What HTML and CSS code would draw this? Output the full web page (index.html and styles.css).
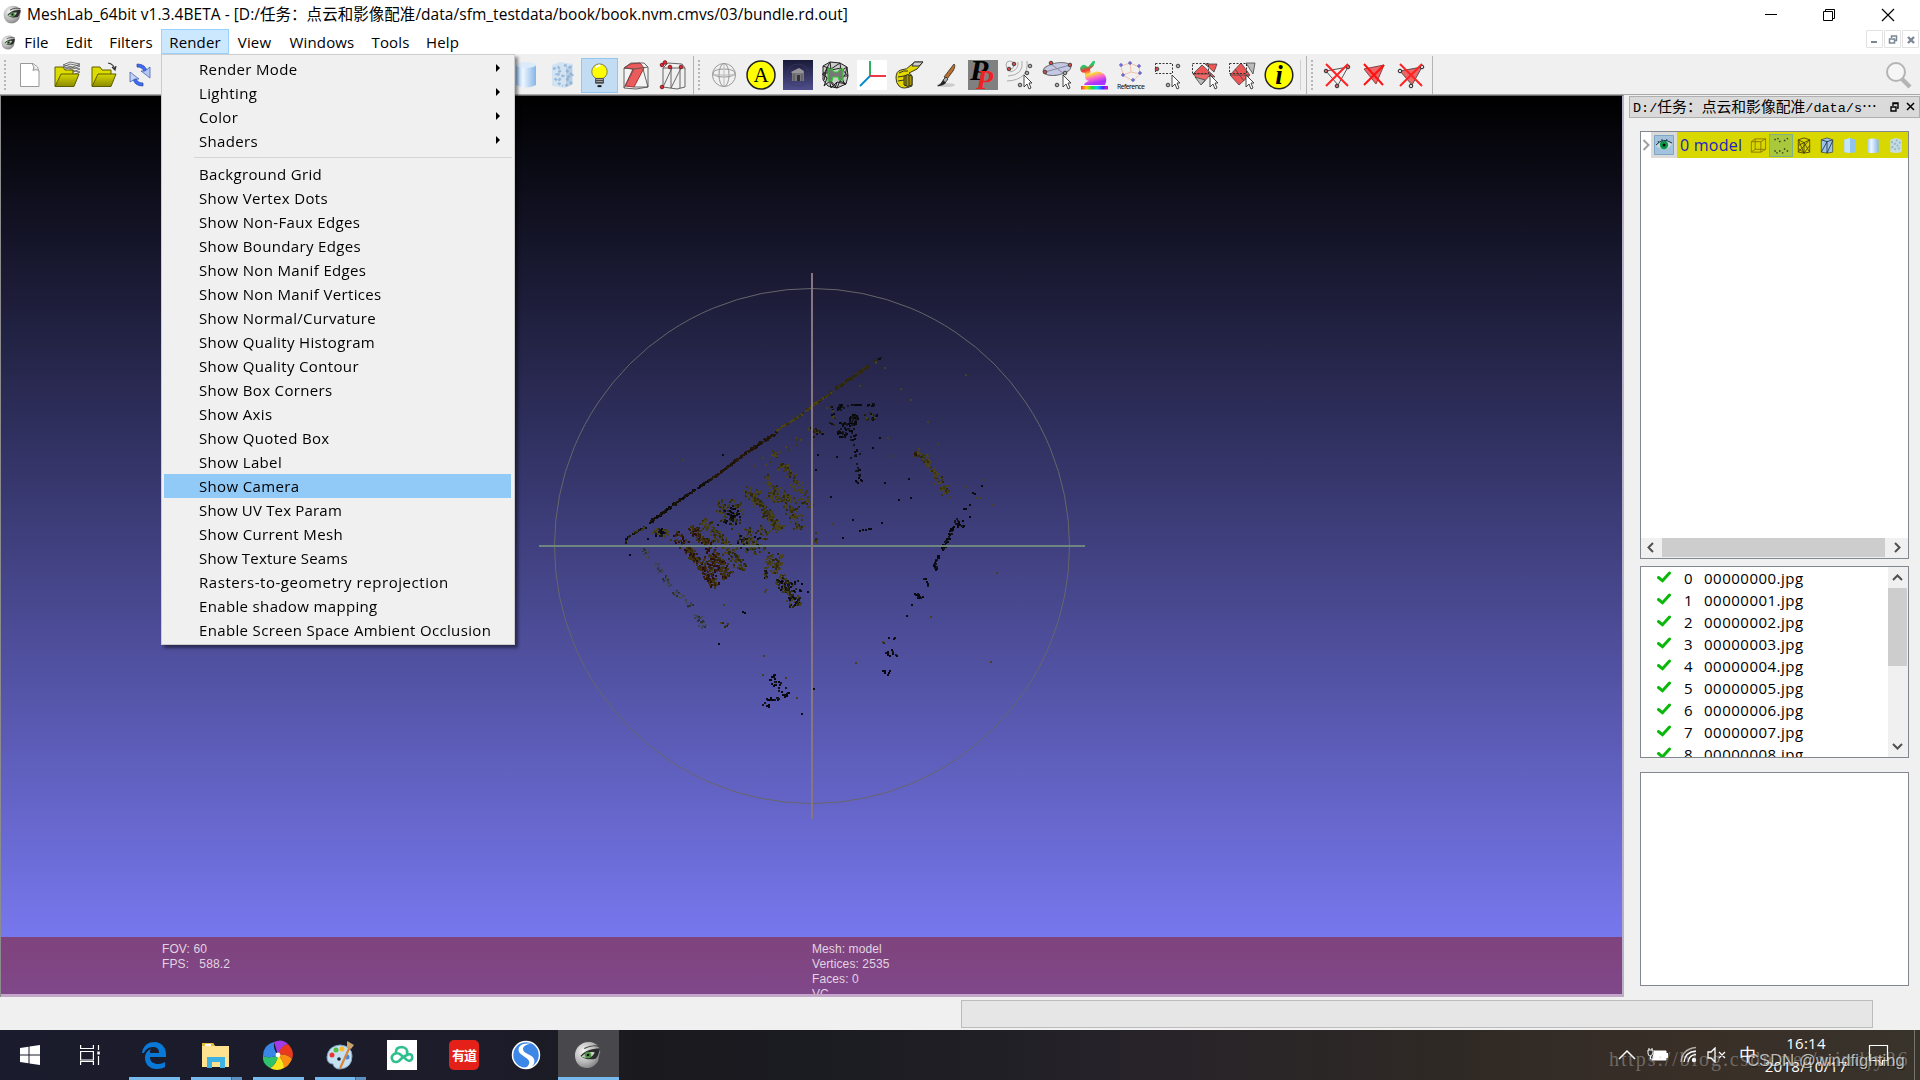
FILE: index.html
```html
<!DOCTYPE html>
<html lang="en">
<head>
<meta charset="utf-8">
<title>MeshLab</title>
<link rel="stylesheet" href="styles.css">
</head>
<body>
<svg class="defs" width="0" height="0">
  <defs>
    <radialGradient id="ball" cx=".35" cy=".35" r=".75"><stop offset="0" stop-color="#f4f4f4"/><stop offset=".6" stop-color="#b5b5b5"/><stop offset="1" stop-color="#777"/></radialGradient>
    <linearGradient id="fold" x1="0" y1="0" x2="0" y2="1"><stop offset="0" stop-color="#d8d800"/><stop offset="1" stop-color="#8a8a00"/></linearGradient>
    <linearGradient id="cyl"><stop offset="0" stop-color="#9cc8f4"/><stop offset=".35" stop-color="#eef6ff"/><stop offset="1" stop-color="#84b4e8"/></linearGradient>
    <linearGradient id="rain"><stop offset="0" stop-color="#f33"/><stop offset=".2" stop-color="#fc0"/><stop offset=".4" stop-color="#2d2"/><stop offset=".6" stop-color="#0cf"/><stop offset=".8" stop-color="#33f"/><stop offset="1" stop-color="#f0c"/></linearGradient>
    <linearGradient id="rainv" x1="0" y1="0" x2=".3" y2="1"><stop offset="0" stop-color="#0d9"/><stop offset=".25" stop-color="#2c6"/><stop offset=".42" stop-color="#f33"/><stop offset=".6" stop-color="#fd3"/><stop offset=".8" stop-color="#f6c"/><stop offset="1" stop-color="#a3f"/></linearGradient>
    <linearGradient id="temple" x1="0" y1="0" x2="0" y2="1"><stop offset="0" stop-color="#1a1a38"/><stop offset="1" stop-color="#504f8c"/></linearGradient>
    <symbol id="eye" viewBox="0 0 30 30">
      <path d="M16 1C7 1 1 8 1 15c0 8 5 14 13 14 6 0 8-3 11-6 2-3 1-6 3-11 1-3-3-11-12-11z" fill="url(#ball)"/>
      <path d="M7 16c5-6 11-8 21-8-1 3-2 9-5 11-5 1-12 1-16-3z" fill="#2c2c2c"/>
      <path d="M8 17c3-4 8-6 14-5-1 5-8 8-14 5z" fill="#c9d8c4"/>
      <circle cx="15" cy="15" r="3.600" fill="#4f9448"/><circle cx="15" cy="15" r="1.400" fill="#111"/>
      <path d="M11 8c6-3 10-4 17-2" stroke="#444" stroke-width="1.400" fill="none"/>
    </symbol>
    <symbol id="cursor" viewBox="0 0 10 16"><path d="M1 1v12l3-3 2 5 2-1-2-5h3z" fill="#fff" stroke="#333" stroke-width=".9"/></symbol>
    <symbol id="check" viewBox="0 0 14 12"><path d="M1.500 6.500l4 3.300L12.500 2" fill="none" stroke="#0ab80a" stroke-width="3" stroke-linecap="round"/></symbol>
  </defs>
</svg>

<div class="window">
  <header class="titlebar">
    <svg class="app-icon" width="19" height="19"><use href="#eye"/></svg>
    <span class="title">MeshLab_64bit v1.3.4BETA - [D:/任务：点云和影像配准/data/sfm_testdata/book/book.nvm.cmvs/03/bundle.rd.out]</span>
    <div class="win-buttons">
      <svg width="58" height="28" viewBox="0 0 58 28"><path d="M23 13.500h12" stroke="#000"/></svg>
      <svg width="58" height="28" viewBox="0 0 58 28"><path d="M23.500 10.500h9v9h-9zM25.500 10V8.500h9v9H33" fill="none" stroke="#000"/></svg>
      <svg width="58" height="28" viewBox="0 0 58 28"><path d="M24 8l12 12M36 8L24 20" stroke="#000" stroke-width="1.200"/></svg>
    </div>
  </header>

  <nav class="menubar">
    <svg class="doc-icon" width="15" height="15"><use href="#eye"/></svg>
    <span class="m m-file">File</span><span class="m m-edit">Edit</span><span class="m m-filters">Filters</span><span class="m m-render">Render</span><span class="m m-view">View</span><span class="m m-windows">Windows</span><span class="m m-tools">Tools</span><span class="m m-help">Help</span>
    <div class="mdi">
      <svg width="17" height="18" viewBox="0 0 17 18"><path d="M.5.5h16v17H.5z" fill="#fff" stroke="#e2e2e2"/><path d="M5 12h6" stroke="#7a8794" stroke-width="2"/></svg>
      <svg width="17" height="18" viewBox="0 0 17 18"><path d="M.5.5h16v17H.5z" fill="#fff" stroke="#e2e2e2"/><path d="M5.500 9h5v4h-5zM7.500 8V6h5v4.500H11" fill="none" stroke="#7a8794" stroke-width="1.500"/></svg>
      <svg width="17" height="18" viewBox="0 0 17 18"><path d="M.5.5h16v17H.5z" fill="#fff" stroke="#e2e2e2"/><path d="M6 7l6 6M12 7l-6 6" stroke="#7a8794" stroke-width="2.400"/></svg>
    </div>
  </nav>

  <div class="toolbar">
    <i class="handle"></i>
    <div class="tools tools-file">
      <svg viewBox="0 0 30 30"><path d="M5.500 3.500h12.500q6 3 6 8v15H5.500z" fill="#fff" stroke="#999"/><path d="M17 3.500q3 3 1 7 5-2 6 1" fill="#ddd" stroke="#999"/></svg>
      <svg viewBox="0 0 30 30"><g fill="#eee" stroke="#555" stroke-width=".8"><path d="M11 13l7-3 10 2-7 3zM11 10l7-3 10 2-7 3zM11 7l7-3 10 2-7 3zM11 5l7-3 10 2-7 3z"/></g><path d="M3 26V7h8l2 3h8v5" fill="#dcdc00" stroke="#5c5c00"/><path d="M3 26.500L9 14h18l-5 12.500z" fill="url(#fold)" stroke="#5c5c00"/></svg>
      <svg viewBox="0 0 30 30"><path d="M3 26V7h8l2 3h9v5" fill="#dcdc00" stroke="#5c5c00"/><path d="M3 26.500L9 14h18l-5 12.500z" fill="url(#fold)" stroke="#5c5c00"/><path d="M19 3q6 1 7 7m-3-3l3 3 1-4" fill="none" stroke="#333" stroke-width="1.200"/></svg>
      <svg viewBox="0 0 30 30"><path d="M12 4q9 0 10 8l-3 0Q18 7 12 7z" fill="#3f6cf0" stroke="#2244aa" stroke-width=".7"/><path d="M16 11h4l5-4v11z" fill="#b4c6f4" stroke="#3355aa" stroke-width=".7"/><path d="M18 26q-9 0-10-8l3 0q1 5 7 5z" fill="#3f6cf0" stroke="#2244aa" stroke-width=".7"/><path d="M5 22V12l9 7h-4z" fill="#c4d2f6" stroke="#3355aa" stroke-width=".7"/></svg>
    </div>
    <div class="tools tools-render">
      <svg viewBox="0 0 30 30"><path d="M5 5v20q10 5 20 0V5z" fill="url(#cyl)"/><ellipse cx="15" cy="5" rx="10" ry="3" fill="#dcebfa"/></svg>
      <svg viewBox="0 0 30 30"><path d="M4 5l8-3 13 2v20l-8 4-13-2z" fill="#d3e3f2"/><path d="M5 9l5-2 3 3-4 4 6 2-5 5-4-3M16 5l6 2-3 4 5 4-6 3 5 5-6 3M10 23l5 3" fill="none" stroke="#9abcdc" stroke-width="2.500" stroke-dasharray="3 2"/><path d="M18 8l6-3v20l-6 2z" fill="#8aa6c4" opacity=".35"/></svg>
      <svg class="on" viewBox="0 0 30 30"><circle cx="15" cy="11" r="8" fill="#ff0" stroke="#776"/><path d="M11 7q2-3 5-2" stroke="#fff" stroke-width="2" fill="none"/><path d="M11 18h8v5h-8z" fill="#bbb" stroke="#444"/><path d="M11 20h8M11 22h8" stroke="#333"/><path d="M13 25h4v2h-4z" fill="#111"/></svg>
      <svg viewBox="0 0 30 30"><path d="M3 8l7-5h13l4 4v20l-12 2-12-1z" fill="#f4f4f4"/><path d="M3 8l6-4 10-1 4 5-10 19-9-1 8-17z" fill="#ea5b5b" stroke="#a33"/><g fill="none" stroke="#555" stroke-width=".9"><path d="M3 8l7-5h13l4 4v20l-12 2-12-1zM3 8l10 1 14-2M13 27l14 0L22 9M3 28L13 9"/></g></svg>
      <svg viewBox="0 0 30 30"><g fill="none" stroke="#666"><path d="M5 8l5-5 14 1 3 4v19l-8 2-14-2zM5 8h22M13 8v20M22 8v20M5 27L14 8M13 28L23 8"/></g><g fill="#e23" stroke="#722"><circle cx="4" cy="5" r="1.800"/><circle cx="7" cy="2.500" r="1.800"/><circle cx="12" cy="7" r="1.800"/><circle cx="23" cy="7" r="1.800"/><circle cx="4" cy="27" r="1.800"/></g></svg>
    </div>
    <i class="split"></i><i class="handle"></i>
    <div class="tools tools-edit">
      <svg viewBox="0 0 30 30"><g fill="none" stroke="#999"><circle cx="15" cy="15" r="11.500"/><ellipse cx="15" cy="15" rx="5" ry="11.500"/><ellipse cx="15" cy="13" rx="11" ry="4"/><path d="M4 15h22M15 4v22" stroke="#bbb"/></g></svg>
      <svg viewBox="0 0 30 30"><circle cx="15" cy="15" r="14" fill="#ff0" stroke="#222" stroke-width="1.500"/><text x="15" y="22" text-anchor="middle" class="ic-a">A</text></svg>
      <svg viewBox="0 0 30 30"><path d="M0 0h30v30H0z" fill="url(#temple)"/><circle cx="15" cy="15" r="11" fill="none" stroke="#3a3a66" stroke-width=".6"/><path d="M9 12l7-3 5 3v9H9z" fill="#77777d"/><path d="M8 12l8-4 5 3-1 2H9z" fill="#96969a"/><path d="M11 14v7M19 14v7" stroke="#555"/><path d="M14 15h3v6h-3z" fill="#333"/></svg>
      <svg viewBox="0 0 30 30"><path d="M3 6l7-4 10 1 7 4 1 9-2 8-9 4-9-2-5-6z" fill="#ccc" stroke="#222"/><path d="M3 6l8 3 9-6 1 8 6-4-2 8-5 6 6 3-9-2-2 6-5-7-6 5 3-8-4-5 5 0M4 20l3-12 4 20M10 2l1 8 10-2 7 8M25 25l-5-12M11 28l6-6M2 14l8 6 7 8 5-12 6 0M10 2L4 14" fill="none" stroke="#222"/><path d="M8 9h4l2 3h4l2-3h3v11h-4l-1-3h-5l-1 4H8z" fill="#777" stroke="#3c3" stroke-width="1.200"/></svg>
      <svg viewBox="0 0 30 30"><path d="M0 0h30v30H0z" fill="#fff"/><path d="M13 16V1" stroke="#18a850" stroke-width="1.800"/><path d="M13 16h16" stroke="#e23" stroke-width="1.800"/><path d="M13 16L3 26" stroke="#08c" stroke-width="1.800"/></svg>
      <svg viewBox="0 0 30 30"><path d="M2 18q0-7 5-8 6 0 10-5l4-3h8l-6 7-8 4q4 2 3 7v6q-9 4-13 0-3-3-3-8z" fill="#e4d800" stroke="#332"/><path d="M10 16q4-3 8 0v9q-4 3-8 0z" fill="#a89800" stroke="#332"/><path d="M12 15v11M15 15v11M5 13q5-3 9-2M4 21l6-1M4 17l6-1" stroke="#332" fill="none"/><path d="M20 2h9l-4 4h-7z" fill="#ccc" stroke="#333"/></svg>
      <svg viewBox="0 0 30 30"><ellipse cx="15" cy="25" rx="9" ry="2" fill="#ccc"/><path d="M23 4q2 2-1 7l-6 8-3-2z" fill="#b8702a" stroke="#543"/><path d="M15 17l2 2-3 4-2-3z" fill="#aaa" stroke="#444"/><path d="M12 20l3 3q-4 4-9 3 4-2 6-6z" fill="#222"/></svg>
      <svg viewBox="0 0 30 30"><path d="M0 0h30v30H0z" fill="#808080"/><text x="2" y="20" class="ic-p">P</text><text x="8" y="29" class="ic-p red">P</text></svg>
      <svg viewBox="0 0 30 30"><g fill="none" stroke="#aaa"><circle cx="5" cy="5" r="4"/><path d="M13 2q1 8-8 10M17 1q2 14-14 15M22 1q2 19-20 20"/></g><g fill="#d44" stroke="#444"><circle cx="4" cy="9" r="1.800"/><circle cx="9" cy="4" r="1.800"/></g><g fill="#aaa" stroke="#444"><circle cx="25" cy="6" r="1.800"/><circle cx="22" cy="13" r="1.800"/><circle cx="15" cy="25" r="1.800"/></g><use href="#cursor" x="18" y="14" width="10" height="16"/></svg>
      <svg viewBox="0 0 30 30"><ellipse cx="15" cy="9" rx="14" ry="6" transform="rotate(-10 15 9)" fill="#c4c8e4" stroke="#777"/><path d="M3 12L28 5M9 4l12 9" stroke="#889"/><g fill="#d44" stroke="#444"><circle cx="3" cy="12" r="1.800"/><circle cx="9" cy="3" r="1.800"/><circle cx="28" cy="5" r="1.800"/></g><g fill="#aaa" stroke="#444"><circle cx="23" cy="13" r="1.800"/><circle cx="15" cy="25" r="1.800"/></g><use href="#cursor" x="20" y="14" width="10" height="16"/></svg>
      <svg viewBox="0 0 30 30"><path d="M1 8q2-4 5-3l3 2 5-6h2q0 5-5 8 1 3 0 5 8-5 14 0 4 4 1 11H5q1-3 5-4-5-1-4-8-5 0-5-5z" fill="url(#rainv)"/><path d="M2 26h27v3.500H2z" fill="url(#rain)"/></svg>
      <svg viewBox="0 0 30 30"><path d="M5 6l9-3 9 4 1 7-7 7-10-6zM14 3l1 9 9 2M15 12l-8 3" fill="none" stroke="#f3b492" stroke-width=".8"/><g stroke="#44c"><path d="M3 5h4M5 3v4M12 3h4M14 1v4M21 6h4M23 4v4M22 13h4M24 11v4M15 20h4M17 18v4M5 15h4M7 13v4"/></g><text x="1" y="29" class="ic-ref" textLength="28">Reference</text></svg>
      <svg viewBox="0 0 30 30"><path d="M2.500 3.500h17v10h-17z" fill="none" stroke="#333" stroke-dasharray="2 1.500"/><g fill="#d44" stroke="#444"><circle cx="4" cy="9" r="1.800"/></g><g fill="#aaa" stroke="#444"><circle cx="25" cy="6" r="1.800"/><circle cx="15" cy="25" r="1.800"/></g><use href="#cursor" x="18" y="14" width="10" height="16"/></svg>
      <svg viewBox="0 0 30 30"><g stroke="#444" stroke-width=".8"><path d="M3 14l9-9 13 12z" fill="#e55"/><path d="M15 4h12l-3 8z" fill="#e55"/><path d="M3 14h18l-9 10z" fill="#e66"/><path d="M5 17l6 8 4-5z" fill="#bbb"/></g><path d="M2.500 3.500h16v10h-16z" fill="none" stroke="#333" stroke-dasharray="2 1.500"/><use href="#cursor" x="19" y="14" width="10" height="16"/></svg>
      <svg viewBox="0 0 30 30"><g stroke="#444" stroke-width=".8"><path d="M3 15L14 3l9 12-11 10z" fill="#e55"/><path d="M3 15h19M8 9l9 12" fill="none"/><path d="M19 3h9l-2 11z" fill="#bbb"/></g><path d="M2.500 3.500h17v10h-17z" fill="none" stroke="#333" stroke-dasharray="2 1.500"/><use href="#cursor" x="18" y="14" width="10" height="16"/></svg>
      <svg viewBox="0 0 30 30"><circle cx="15" cy="15" r="13.800" fill="#ff0" stroke="#222" stroke-width="1.500"/><text x="15" y="24" text-anchor="middle" class="ic-i">i</text></svg>
    </div>
    <i class="split thin"></i><i class="split"></i><i class="handle"></i>
    <div class="tools tools-del">
      <svg viewBox="0 0 30 30"><path d="M4 11l22-4-10 18z" fill="none" stroke="#555"/><g fill="#c66" stroke="#333"><circle cx="4" cy="11" r="1.800"/><circle cx="26" cy="7" r="1.800"/><circle cx="15" cy="26" r="1.800"/></g><path d="M4 4l22 22M26 4L4 26" stroke="#f22" stroke-width="2"/></svg>
      <svg viewBox="0 0 30 30"><path d="M5 9l20-4-8 19z" fill="#e66" stroke="#844"/><path d="M5 4l19 21M25 5L5 25" stroke="#f11" stroke-width="2"/></svg>
      <svg viewBox="0 0 30 30"><path d="M4 11l22-4-10 18z" fill="#e66" stroke="#555"/><g fill="#ddd" stroke="#222"><circle cx="4" cy="11" r="1.800"/><circle cx="26" cy="7" r="1.800"/><circle cx="15" cy="26" r="1.800"/></g><path d="M4 4l22 22M26 4L4 26" stroke="#f22" stroke-width="2"/></svg>
    </div>
    <i class="split"></i>
    <svg class="search" width="28" height="30" viewBox="0 0 28 30"><circle cx="11" cy="12" r="9" fill="#f6f6f6" stroke="#b4b4b4" stroke-width="2"/><path d="M17 19l8 8" stroke="#b4b4b4" stroke-width="4.500"/></svg>
  </div>

  <main class="work">
    <section class="viewport">
      <canvas id="cloud" width="1622" height="902"></canvas>
      <svg class="trackball" width="1622" height="902" viewBox="0 95 1622 902">
        <circle cx="812" cy="546" r="257.500" fill="none" stroke="#66666a" stroke-width="1"/>
        <path d="M539 546h546" stroke="#6f8680" stroke-width="2"/>
        <path d="M812 273v546" stroke="#867682" stroke-width="2"/>
      </svg>
      <div class="info">
        <pre class="info-l">FOV: 60
FPS:   588.2</pre>
        <pre class="info-r">Mesh: model
Vertices: 2535
Faces: 0
VC</pre>
      </div>
    </section>

    <aside class="dock">
      <div class="dock-title"><div class="path">D:/<span class="han">任务：点云和影像配准</span>/data/s<span class="han">…</span></div>
        <svg width="26" height="12" viewBox="0 0 26 12"><path d="M1 6h5v4H1zM3 5V2h5v5H7M3 2.500h5" fill="none" stroke="#000" stroke-width="1.400"/><path d="M17 2l7 7M24 2l-7 7" stroke="#000" stroke-width="1.500"/></svg></div>
      <div class="box tree">
        <div class="layer">
          <svg class="chev" width="10" height="26" viewBox="0 0 10 26"><path d="M2.500 8l5 5-5 5" fill="none" stroke="#a0a0a0" stroke-width="2"/></svg>
          <div class="vis"><svg width="20" height="20" viewBox="0 0 20 20"><path d="M.5.5h19v19H.5z" fill="#a3c3dd" stroke="#7ea6c6"/><path d="M2 11Q10 3 18 9q-6 9-16 2z" fill="#cdd"/><circle cx="10" cy="10" r="4.200" fill="#0a9a48"/><circle cx="10" cy="10" r="1.500" fill="#000"/><path d="M2 10Q9 2 18 8M4 6l1 2M8 4v2M13 4l-1 2" stroke="#234" fill="none"/></svg></div>
          <span class="layer-name">0 model</span>
          <div class="modes">
            <svg viewBox="0 0 20 20"><path d="M3 6h10v11H3zM7 3h11v11H7M3 6l4-3M13 6l5-3M13 17l5-3M3 17l4-3V3" fill="none" stroke="#886f00" stroke-width=".9"/></svg>
            <svg class="active" viewBox="0 0 20 20"><g fill="#332"><path d="M3 3h1.500v1.500H3zM6 2h1.500v1.500H6zM8 5h1.500v1.500H8zM13 4h1.500v1.500H13zM16 2h1.500v1.500H16zM3 15h1.500v1.500H3zM5 17h1.500v1.500H5zM8 15h1.500v1.500H8zM11 17h1.500v1.500H11zM16 15h1.500v1.500H16zM13 13h1.500v1.500H13z"/></g></svg>
            <svg viewBox="0 0 20 20"><path d="M4 4l6-2 6 2v13l-6 1-6-1zM4 4l6 3 6-3M10 7v11M4 17L16 4M4 10l6-3 6 10M4 4l6 14 6-8M4 13l6 5" fill="none" stroke="#4a4000" stroke-width=".9"/></svg>
            <svg viewBox="0 0 20 20"><path d="M4 4l6-2 6 2v13l-6 1-6-1z" fill="#9cc4ea" stroke="#444" stroke-width=".8"/><path d="M4 4l6 2 6-2M10 6v12M4 17l6-11M10 18l6-13" fill="none" stroke="#234" stroke-width=".9"/></svg>
            <svg viewBox="0 0 20 20"><path d="M4 4l6-2 6 2v13l-6 1-6-1z" fill="#8ec4ef"/><path d="M4 4l6-2v16l-6-1z" fill="#c6e4fa"/></svg>
            <svg viewBox="0 0 20 20"><path d="M4 4q6-3 12 0v13q-6 2-12 0z" fill="url(#cyl)"/></svg>
            <svg viewBox="0 0 20 20"><path d="M4 4l6-2 6 2v13l-6 1-6-1z" fill="#c8dce0"/><path d="M5 6l4 2-3 4 5 3M10 4l4 3-3 4 4 4" stroke="#92b7d2" stroke-width="2" fill="none" stroke-dasharray="2 2"/></svg>
          </div>
        </div>
        <div class="hscroll">
          <svg width="21" height="19" viewBox="0 0 21 19"><path d="M12 5L7.500 9.500 12 14" fill="none" stroke="#505050" stroke-width="2"/></svg>
          <i></i>
          <svg width="23" height="19" viewBox="0 0 23 19"><path d="M10 5l4.500 4.500L10 14" fill="none" stroke="#505050" stroke-width="2"/></svg>
        </div>
      </div>
      <div class="box rasters">
        <div class="rows">
          <div class="row"><svg width="14" height="12"><use href="#check"/></svg><b>0</b><span>00000000.jpg</span></div>
          <div class="row"><svg width="14" height="12"><use href="#check"/></svg><b>1</b><span>00000001.jpg</span></div>
          <div class="row"><svg width="14" height="12"><use href="#check"/></svg><b>2</b><span>00000002.jpg</span></div>
          <div class="row"><svg width="14" height="12"><use href="#check"/></svg><b>3</b><span>00000003.jpg</span></div>
          <div class="row"><svg width="14" height="12"><use href="#check"/></svg><b>4</b><span>00000004.jpg</span></div>
          <div class="row"><svg width="14" height="12"><use href="#check"/></svg><b>5</b><span>00000005.jpg</span></div>
          <div class="row"><svg width="14" height="12"><use href="#check"/></svg><b>6</b><span>00000006.jpg</span></div>
          <div class="row"><svg width="14" height="12"><use href="#check"/></svg><b>7</b><span>00000007.jpg</span></div>
          <div class="row"><svg width="14" height="12"><use href="#check"/></svg><b>8</b><span>00000008.jpg</span></div>
        </div>
        <div class="vscroll">
          <svg width="19" height="21" viewBox="0 0 19 21"><path d="M5 13l4.500-4.500L14 13" fill="none" stroke="#505050" stroke-width="2"/></svg>
          <i></i>
          <svg width="19" height="21" viewBox="0 0 19 21"><path d="M5 8l4.500 4.500L14 8" fill="none" stroke="#505050" stroke-width="2"/></svg>
        </div>
      </div>
      <div class="box log"></div>
    </aside>
  </main>

  <footer class="status"><div class="progress"></div></footer>
</div>

<div class="dropdown">
  <div class="item sub">Render Mode</div>
  <div class="item sub">Lighting</div>
  <div class="item sub">Color</div>
  <div class="item sub">Shaders</div>
  <hr>
  <div class="item">Background Grid</div>
  <div class="item">Show Vertex Dots</div>
  <div class="item">Show Non-Faux Edges</div>
  <div class="item">Show Boundary Edges</div>
  <div class="item">Show Non Manif Edges</div>
  <div class="item">Show Non Manif Vertices</div>
  <div class="item">Show Normal/Curvature</div>
  <div class="item">Show Quality Histogram</div>
  <div class="item">Show Quality Contour</div>
  <div class="item">Show Box Corners</div>
  <div class="item">Show Axis</div>
  <div class="item">Show Quoted Box</div>
  <div class="item">Show Label</div>
  <div class="item hover">Show Camera</div>
  <div class="item tight">Show UV Tex Param</div>
  <div class="item">Show Current Mesh</div>
  <div class="item tight">Show Texture Seams</div>
  <div class="item wide">Rasters-to-geometry reprojection</div>
  <div class="item">Enable shadow mapping</div>
  <div class="item">Enable Screen Space Ambient Occlusion</div>
</div>

<div class="taskbar">
  <div class="slot start"><svg width="20" height="20" viewBox="0 0 20 20"><path d="M0 3l8.500-1.200V9.500H0zM9.500 1.600L20 0v9.500H9.500zM0 10.500h8.500v7.700L0 17zM9.500 10.500H20V20L9.500 18.400z" fill="#fff"/></svg></div>
  <div class="slot view"><svg width="20" height="20" viewBox="0 0 20 20"><g fill="none" stroke="#fff" stroke-width="1.200"><path d="M.6 0v3.500h12.800V0M.6 6.500h12.800v8.500H.6zM.6 20v-3.500h12.800V20M18.500 0v5M18.500 11v9"/></g><path d="M17.300 6.500h2.500v3h-2.500z" fill="#fff"/></svg></div>
  <div class="slot run"><svg width="30" height="30" viewBox="0 0 30 30"><path d="M3 13C4 5 10 2 15.500 2 22 2 27 7 27 14v3H11c0 5 4 7 8 7 3 0 5-1 7-2v5c-2 1-5 2-8 2-8 0-12-5-12-11 0-5 3-8 6-9-1 1-1 2-1 4h9c0-4-2-6-6-6-4.500 0-8 3-9 6z" fill="#0a78d7"/></svg></div>
  <div class="slot run multi"><svg width="30" height="30" viewBox="0 0 30 30"><path d="M1 3h11l2 3h14v21H1z" fill="#ffe28f"/><path d="M1 3h11l2 3H1z" fill="#e9b93c"/><path d="M4 4h6v2H4z" fill="#fff"/><path d="M6 28V17h18v11h-5v-6h-8v6z" fill="#3fb2e4"/></svg></div>
  <div class="slot run"><svg width="30" height="30" viewBox="0 0 30 30"><path d="M15 15L11 2q8-4 14 2-7 2-10 11z" fill="#a43be8"/><path d="M15 15Q17 6 25 4q7 7 4 15-5-6-14-4z" fill="#e93a1e"/><path d="M15 15q9-2 14 4-3 7-8 9-1-9-6-13z" fill="#fb8c14"/><path d="M15 15q6 6 6 13-7 4-14 0 7-4 8-13z" fill="#f8e51a"/><path d="M15 15q-1 9-8 13-8-4-7-12 7 3 15-1z" fill="#2fc26a"/><path d="M15 15q-8 4-15 1Q0 5 11 2q-1 8 4 13z" fill="#3a86e8"/><circle cx="15" cy="15" r="2.400" fill="#fff"/></svg></div>
  <div class="slot run multi"><svg width="30" height="30" viewBox="0 0 30 30"><path d="M2 17Q3 6 15 5q12 1 12 11 0 12-12 13-6 0-7-5-6 0-6-7z" fill="#c4e0f2" stroke="#7fa6c2"/><circle cx="7" cy="15" r="2.500" fill="#e33"/><circle cx="11" cy="10" r="2.500" fill="#5b4"/><circle cx="17" cy="9" r="2.500" fill="#fb2"/><circle cx="14" cy="19" r="1.800" fill="#123"/><circle cx="22" cy="17" r="2.500" fill="#48d"/><path d="M24 6l2 1-10 22-2-1z" fill="#d9863a"/><path d="M22 1l7 4-3 4-4-2z" fill="#c9a36a"/></svg></div>
  <div class="slot"><svg width="30" height="30" viewBox="0 0 30 30"><path d="M0 0h30v30H0z" fill="#fff"/><path d="M15 18l-3 3q-3 2-6 0-3-4 1-7 4-2 7 1l6 5q3 2 5-1 1-5-3-5l-4 2M9 12q0-5 6-5 6 1 5 6" fill="none" stroke="#2fbf8f" stroke-width="2.600" stroke-linecap="round"/></svg></div>
  <div class="slot"><div class="youdao">有道</div></div>
  <div class="slot"><svg width="30" height="30" viewBox="0 0 30 30"><circle cx="15" cy="15" r="13.500" fill="#3d87e6" stroke="#fff" stroke-width="1.500"/><path d="M20 4C11 2 6 7 8 12c3 5 12 6 10 12-1 3-4 4-7 4 8 3 14-3 12-9-2-5-11-5-11-10 0-3 4-5 8-5z" fill="#fff"/></svg></div>
  <div class="slot run current"><svg width="28" height="30"><use href="#eye"/></svg></div>

  <div class="tray">
    <svg class="t-up" width="18" height="12" viewBox="0 0 18 12"><path d="M1 10l8-8 8 8" fill="none" stroke="#fff" stroke-width="1.500"/></svg>
    <svg class="t-bat" width="22" height="16" viewBox="0 0 22 16"><path d="M7 4h12v9H5" fill="#fff" stroke="#fff"/><path d="M19 6h2v5h-2z" fill="#fff"/><path d="M1 3h5v3q-1 3-3 3t-2-3zM2 1v2M5 1v2M3.500 9v3h2" fill="#332e26" stroke="#fff"/></svg>
    <svg class="t-wifi" width="18" height="18" viewBox="0 0 18 18"><g fill="none" stroke="#fff" stroke-width="1.300"><path d="M1 16Q2 3 16 1.500" opacity=".6"/><path d="M4 16Q5 6 16 5"/><path d="M8 16q1-7 8-7.500"/></g><circle cx="14" cy="14" r="2.200" fill="#fff"/></svg>
    <svg class="t-vol" width="20" height="16" viewBox="0 0 20 16"><path d="M1 5h3l4-4v14l-4-4H1zM12 5l6 6M18 5l-6 6" fill="none" stroke="#fff" stroke-width="1.300"/></svg>
    <span class="t-ime">中</span>
    <div class="clock"><span>16:14</span><span>2018/10/17</span></div>
    <svg class="t-note" width="22" height="22" viewBox="0 0 22 22"><path d="M1.500 1.500h18v15h-5v4l-4-4h-9z" fill="none" stroke="#fff" stroke-width="1.200"/></svg>
    <i class="peek"></i>
  </div>
  <div class="mark url">https://blog.csdn.net/windjy86</div>
  <div class="mark csdn">CSDN @windfighting</div>
</div>
<script src="cloud.js"></script>
</body>
</html>
```
FILE: styles.css
```css
* { box-sizing: border-box; }
body { margin: 0; width: 1920px; height: 1080px; overflow: hidden; background: #f0f0f0; color: #000; font: 15px/24px "Open Sans", "Noto Sans CJK SC", sans-serif; }
.defs { position: absolute; }
svg { display: block; flex: none; }
.window { height: 1030px; display: flex; flex-direction: column; }

.titlebar { height: 29px; background: #fff; display: flex; align-items: center; padding-left: 3px; }
.title { margin: -1px 0 0 5px; white-space: pre; font-size: 15.500px; letter-spacing: .04px; }
.win-buttons { margin-left: auto; display: flex; margin-right: 4px; }

.menubar { height: 27px; background: #fff; border-bottom: 2px solid #f0f0f0; display: flex; align-items: stretch; padding-left: 1px; }
.doc-icon { margin: 6px 0 0; }
.m { text-align: center; line-height: 26px; letter-spacing: .15px; }
.m-file { width: 41px; } .m-edit { width: 44px; } .m-filters { width: 60px; }
.m-render { width: 68px; background: #cce8ff; border: 1px solid #99d1ff; line-height: 24px; }
.m-view { width: 51px; } .m-windows { width: 84px; } .m-tools { width: 53px; } .m-help { width: 51px; }
.mdi { margin-left: auto; display: flex; gap: 1px; padding: 1px 1px 0 0; }

.toolbar { height: 39px; display: flex; align-items: center; border-bottom: 1px solid #a8a8a8; padding-left: 4px; }
.handle { width: 2px; height: 30px; background: repeating-linear-gradient(#b8b8b8 0 2px, transparent 2px 4px); }
.tools { display: flex; align-items: center; }
.tools svg { width: 30px; height: 30px; margin: 0 3.35px; }
.tools .on { width: 37px; height: 35px; margin: 0 -.15px; padding: 2px 3px; background: #c1dcf3; border: 1px solid #90c8f0; }
.tools-file { margin-left: 6px; }
.tools-render { margin-left: 349px; }
.tools-render + .split { margin-left: 1.500px; }
.split { width: 1px; height: 38px; background: #b4b4b4; margin-right: 4px; }
.split.thin { height: 30px; background: #d0d0d0; margin: 0 5px 0 2px; }
.tools-edit { margin-left: 6px; }
.tools-edit svg { margin: 0 3.500px; }
.tools-del { margin-left: 6px; }
.tools-del svg { margin: 0 3.500px; }
.tools-del + .split { margin-left: 2px; }
.search { margin: 0 7px 0 auto; }
.ic-a { font: 21px "Liberation Serif", serif; }
.ic-p { font: italic bold 30px "Liberation Serif", serif; }
.ic-p.red { fill: #e22; font-size: 28px; }
.ic-i { font: italic bold 27px "Liberation Serif", serif; }
.ic-ref { font: 7px "Open Sans", sans-serif; }

.work { height: 902px; display: flex; }
.viewport { position: relative; width: 1624px; height: 902px; overflow: hidden; background: linear-gradient(#000, #8080ff); border-left: 1px solid #8c8c8c; border-right: 2px solid #b8b0c8; border-top: 1px solid #666; display: flex; flex-direction: column; justify-content: flex-end; }
#cloud, .trackball { position: absolute; left: -1px; top: -1px; }
.info { height: 60px; background: linear-gradient(#7f447c, #80478a); border-bottom: 3px solid #c3a6c8; display: flex; color: #e2d4e2; overflow: hidden; }
.info pre { margin: 5px 0 0; font: 12px/15px "Liberation Sans", sans-serif; letter-spacing: .1px; }
.info-l { width: 650px; margin-left: 161px !important; }

.dock { flex: 1; display: flex; flex-direction: column; padding: 1px 0 0 5px; }
.dock-title { height: 22px; background: #dadada; border: 1px solid #b0b0b0; display: flex; align-items: center; padding: 0 3px 0 3px; white-space: pre; }
.path { display: flex; align-items: baseline; font: 13.500px/20px "Liberation Mono", monospace; padding-top: 1px; letter-spacing: 0; }
.han { font: 14.800px/20px "Noto Sans CJK SC", sans-serif; letter-spacing: 0; }
.dock-title svg { margin-left: auto; }
.box { background: #fff; border: 1px solid #828790; margin: 0 11px 0 11px; }
.tree { margin-top: 13px; height: 428px; display: flex; flex-direction: column; justify-content: space-between; }
.layer { display: flex; height: 26px; background: #d8d800; }
.chev { background: #fff; }
.vis { width: 26px; background: #dadada; padding: 3px; }
.layer-name { width: 70px; padding-left: 3px; color: #2020c8; font-size: 16px; line-height: 27px; letter-spacing: .25px; white-space: nowrap; }
.modes { display: flex; gap: 1px; align-items: center; }
.modes svg { width: 22px; height: 21px; padding: 1px; }
.modes .active { background: #a9c93c; outline: 1px solid #7fb08c; }
.hscroll { display: flex; height: 20px; background: #f0f0f0; }
.hscroll i { width: 223px; height: 19px; background: #cdcdcd; }
.rasters { margin-top: 7px; height: 192px; display: flex; overflow: hidden; }
.rows { width: 247px; height: 190px; overflow: hidden; padding: 0 0 0 16px; }
.row { display: flex; height: 22px; align-items: center; line-height: 22px; }
.row b { font-weight: 400; width: 20px; margin-left: 13px; }
.row span { letter-spacing: .5px; }
.row svg { margin-top: -2px; }
.vscroll { width: 20px; background: #f0f0f0; display: flex; flex-direction: column; }
.vscroll i { width: 19px; height: 78px; background: #cdcdcd; }
.vscroll svg:last-child { margin-top: auto; }
.log { margin-top: 14px; height: 214px; }

.status { height: 33px; padding: 3px 47px 0 0; display: flex; justify-content: flex-end; }
.progress { width: 912px; height: 28px; background: #e6e6e6; border: 1px solid #bcbcbc; }

.dropdown { position: absolute; left: 161px; top: 54px; width: 354px; height: 591px; padding: 2px; background: #f0f0f0; border: 1px solid #ccc; box-shadow: 3px 3px 3px rgba(0,0,0,.45); }
.item { height: 24px; line-height: 24px; padding-left: 35px; width: 347px; font-size: 15px; letter-spacing: .35px; white-space: nowrap; }
.item.wide { letter-spacing: .55px; }
.item.tight { letter-spacing: .18px; }
.item.hover { background: #91c9f7; }
.sub { display: flex; justify-content: space-between; align-items: center; padding-right: 11px; }
.sub::after { content: ""; border-left: 4px solid #000; border-top: 4.500px solid transparent; border-bottom: 4.500px solid transparent; margin-top: -2px; }
.dropdown hr { border: 0; height: 1px; background: #d5d5d5; margin: 4px 0 4px 30px; }

.taskbar { position: relative; height: 50px; display: flex; background: linear-gradient(90deg, #1a1b2c 0, #1c1c2a 500px, #1a1a1e 640px, #1b1b22 820px, #252229 1100px, #2f2925 1450px, #392f27 1700px, #38332b 1920px); }
.slot { width: 62px; display: flex; align-items: center; justify-content: center; position: relative; }
.start { width: 60px; } .view { width: 60px; margin-right: 3px; }
.slot.run::after { content: ""; position: absolute; bottom: 0; left: 6px; width: 51px; height: 3px; background: #76b9ed; }
.slot.multi::after { background: linear-gradient(90deg, #76b9ed 40px, #42678a 40px 41px, #5b8fbd 41px); }
.slot.run svg, .slot.run + .slot svg { margin-left: -1px; }
.slot.current { background: #48484c; width: 61px; margin-left: 1px; }
.slot.current::after { left: 0; width: 61px; }
.youdao { width: 30px; height: 30px; border-radius: 5px; background: #e32119; color: #fff; font: bold 13px/30px "Noto Sans CJK SC", sans-serif; text-align: center; letter-spacing: -1px; }
.tray { margin-left: auto; display: flex; align-items: center; color: #fff; height: 50px; }
.t-up { margin-right: 11px; } .t-bat { margin-right: 11px; } .t-wifi { margin-right: 9px; } .t-vol { margin-right: 12px; }
.t-ime { font: 17px/20px "Noto Sans CJK SC", sans-serif; width: 25px; margin-top: -2px; }
.clock { width: 84px; display: flex; flex-direction: column; text-align: center; line-height: 23px; font-size: 15px; letter-spacing: .3px; }
.t-note { margin: 0 24px 0 20px; }
.peek { width: 1px; height: 50px; background: #77736c; margin-right: 5px; }
.mark { position: absolute; white-space: nowrap; }
.url { left: 1609px; top: 16px; font: 20px/26px "Liberation Serif", serif; letter-spacing: 1.900px; color: rgba(200,200,200,.4); }
.csdn { left: 1747px; top: 18px; font: 16.500px/24px "Liberation Sans", sans-serif; letter-spacing: .15px; color: rgba(235,235,235,.75); text-shadow: 1px 1px 1px rgba(0,0,0,.5); }
```
FILE: cloud.js
```js
const ctx = document.getElementById('cloud').getContext('2d');
let seed = 20181017;
function rnd() {
  seed = (seed + 0x6D2B79F5) | 0;
  let t = Math.imul(seed ^ (seed >>> 15), 1 | seed);
  t = (t + Math.imul(t ^ (t >>> 7), 61 | t)) ^ t;
  return ((t ^ (t >>> 14)) >>> 0) / 4294967296;
}
// Model units are thirds of a pixel from the cloud's corner.
function dot(x, y, c) {
  ctx.fillStyle = c;
  ctx.fillRect(Math.round(599 + x / 3), Math.round(234 + y / 3), 2, 2);
}
// [x1, y1, x2, y2, spread, count, palette]
const K = ['#0a0a10', '#08080c', '#15151c'];
const O = ['#3c3512', '#4a431b', '#2e290c', '#46401c'];
const B = ['#33200c', '#45300c', '#3c3512', '#2b0f0c'];
const M = ['#0c0c12', '#2d2910', '#1d1b10', '#40401f'];
const G = ['#3c4050', '#2c2f3c', '#464a50'];
const D = ['#0c0c0c', '#1c180c', '#141008'];
const E = ['#1c120a', '#2a1a0a', '#22180a'];
const clusters = [
  [76, 640, 80, 625, 3, 6, M], [80, 622, 140, 590, 5, 20, M], [148, 578, 275, 486, 4, 115, D], [275, 486, 340, 443, 3, 50, D],
  [340, 443, 440, 368, 3, 115, E], [445, 364, 530, 308, 5, 80, E], [530, 303, 610, 250, 3, 48, O], [612, 246, 660, 212, 3, 28, O],
  [660, 210, 700, 185, 3, 18, O], [706, 178, 806, 107, 4, 110, ['#2c270c', '#342e10']], [822, 98, 842, 86, 4, 10, M], [838, 88, 845, 85, 2, 4, K],
  [712, 236, 728, 228, 9, 24, K], [735, 225, 825, 225, 2, 15, K], [815, 228, 824, 222, 5, 8, K], [690, 230, 700, 290, 13, 14, M], [750, 260, 772, 270, 18, 34, K],
  [720, 285, 770, 280, 8, 18, K], [792, 262, 835, 262, 14, 16, M], [715, 305, 770, 320, 24, 34, K], [758, 340, 775, 460, 18, 24, K], [620, 295, 670, 318, 18, 18, M],
  [945, 365, 970, 385, 14, 24, O], [970, 375, 1040, 490, 16, 88, O], [945, 370, 952, 378, 7, 6, B],
  [515, 370, 540, 375, 10, 10, O], [540, 405, 565, 415, 15, 40, O], [565, 425, 635, 530, 18, 55, O],
  [500, 435, 525, 500, 18, 30, O], [515, 485, 595, 545, 32, 90, O], [545, 500, 570, 510, 14, 28, O], [575, 535, 605, 600, 22, 36, O],
  [435, 485, 475, 500, 22, 35, O], [465, 500, 540, 600, 17, 130, O], [350, 535, 425, 525, 30, 50, O], [355, 560, 425, 575, 32, 46, M], [385, 540, 410, 560, 22, 22, K],
  [310, 570, 350, 615, 20, 52, O], [350, 610, 430, 720, 18, 95, O], [270, 590, 320, 640, 18, 75, B], [320, 640, 385, 740, 24, 125, B],
  [260, 655, 350, 770, 16, 165, B], [225, 615, 260, 645, 24, 36, B], [310, 690, 360, 720, 35, 60, B], [155, 600, 205, 612, 20, 28, O], [175, 605, 190, 620, 16, 14, K],
  [415, 630, 475, 650, 34, 48, M], [430, 600, 490, 665, 30, 52, O], [480, 585, 510, 635, 22, 20, O], [500, 685, 555, 695, 24, 48, O], [494, 700, 498, 745, 5, 15, M],
  [515, 700, 560, 775, 22, 48, O], [540, 745, 592, 825, 24, 98, M], [590, 815, 600, 825, 8, 14, M], [575, 755, 605, 785, 20, 12, K],
  [130, 650, 150, 680, 14, 14, G], [165, 700, 190, 725, 12, 16, G], [195, 740, 215, 765, 13, 16, G], [222, 785, 250, 800, 14, 16, G], [255, 815, 275, 832, 12, 11, G], [285, 850, 318, 892, 14, 21, G],
  [1070, 568, 1092, 592, 14, 16, K], [1062, 590, 1028, 660, 6, 42, K], [1022, 670, 1000, 712, 5, 15, K], [1000, 706, 1012, 716, 7, 10, K],
  [945, 792, 968, 805, 8, 12, K], [975, 745, 985, 770, 4, 5, K],
  [850, 940, 895, 918, 8, 6, M], [855, 965, 895, 982, 14, 10, K], [842, 1020, 870, 1030, 12, 6, K],
  [515, 1035, 530, 1065, 18, 16, K], [535, 1070, 565, 1095, 16, 14, K], [488, 1125, 540, 1105, 14, 18, K], [360, 870, 382, 890, 12, 6, O], [640, 610, 655, 650, 10, 7, O], [395, 680, 440, 720, 14, 12, O], [480, 400, 610, 330, 20, 12, O]
];
for (const [x1, y1, x2, y2, w, n, pal] of clusters) {
  const len = Math.hypot(x2 - x1, y2 - y1);
  const nx = -(y2 - y1) / len, ny = (x2 - x1) / len;
  for (let i = 0; i < n; i++) {
    const t = rnd(), d = (rnd() + rnd() - 1) * w;
    dot(x1 + (x2 - x1) * t + nx * d, y1 + (y2 - y1) * t + ny * d, pal[Math.floor(rnd() * pal.length)]);
  }
}
const strays = [
  [249, 390, 1], [369, 375, 0], [855, 115, 1], [780, 168, 1], [902, 177, 1], [1098, 135, 1], [933, 210, 1], [984, 276, 1], [864, 325, 1], [839, 324, 0],
  [820, 353, 0], [878, 378, 1], [1014, 342, 1], [711, 381, 0], [655, 375, 0], [648, 421, 0], [927, 447, 0], [855, 459, 0], [693, 500, 0], [896, 510, 0],
  [933, 504, 0], [759, 570, 0], [845, 578, 0], [698, 582, 1], [729, 624, 0], [779, 602, 0], [789, 600, 0], [797, 600, 0], [806, 597, 0], [812, 597, 0],
  [1101, 471, 1], [1146, 468, 0], [1152, 450, 1], [1119, 489, 0], [1124, 492, 0], [1130, 504, 1], [1140, 504, 1], [1176, 525, 1], [1110, 525, 0], [1092, 536, 0],
  [1098, 536, 0], [1110, 561, 0], [1050, 500, 1], [936, 825, 0], [921, 857, 0], [993, 862, 1], [1190, 730, 1], [1173, 997, 1], [768, 998, 1],
  [641, 1077, 0], [605, 1152, 0], [591, 1104, 1], [357, 943, 0], [492, 979, 1], [371, 825, 1], [430, 845, 0], [434, 848, 0], [624, 785, 0], [90, 675, 0],
  [144, 627, 0], [495, 786, 1], [498, 780, 1], [558, 1044, 1], [488, 1036, 1], [463, 408, 1]
];
for (const [x, y, k] of strays) dot(x, y, k ? '#46401f' : '#0a0a10');
```
